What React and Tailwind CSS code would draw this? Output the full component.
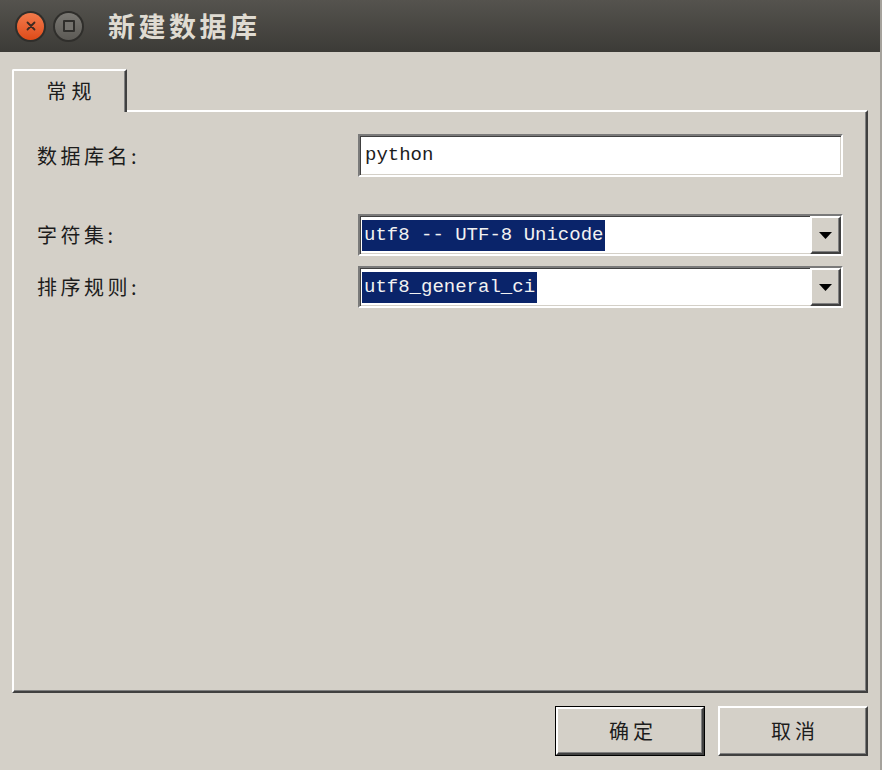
import React from 'react';

// Classic bevel styles (Win-style controls on Ubuntu window)
const sunken =
  'border-2 border-t-[#7a7a7a] border-l-[#7a7a7a] border-b-white border-r-white shadow-[inset_1px_1px_0_#404040,inset_-1px_-1px_0_#d4d0c8]';
const raised =
  'border-2 border-t-white border-l-white border-r-[#404040] border-b-[#404040] shadow-[inset_-1px_-1px_0_#808080]';

const cjk = "font-['Noto_Sans_CJK_SC','Noto_Sans',sans-serif]";
const mono = "font-['Liberation_Mono','Noto_Sans_CJK_SC',monospace]";

const Arrow = () => (
  <svg width="13" height="7" viewBox="0 0 13 7">
    <path d="M0 0h13L6.5 7z" fill="#000" />
  </svg>
);

const Combo = ({ value }) => (
  <div className={`w-[485px] h-[42px] bg-white flex items-stretch ${sunken}`}>
    <div className="flex-1 flex items-center pl-[2px]">
      <span className={`bg-[#0a246a] text-[#f2f2f2] text-[19px] leading-[31px] h-[31px] pl-[2px] pr-[2px] ${mono}`}>
        {value}
      </span>
    </div>
    <div className={`w-[31px] bg-[#d4d0c8] flex items-center justify-center ${raised}`}>
      <Arrow />
    </div>
  </div>
);

const Label = ({ children }) => (
  <div className={`w-[321px] text-[20px] tracking-[3.5px] text-[#1c1c1c] ${cjk}`}>{children}</div>
);

export default function App() {
  return (
    <div className={`w-[882px] h-[770px] bg-[#d4d0c8] flex flex-col border-r-2 border-[#a5a29c] ${cjk}`}>
      {/* title bar */}
      <div className="h-[52px] shrink-0 bg-gradient-to-b from-[#55534e] to-[#3c3b37] flex items-center pl-[15px]">
        <div className="w-[31px] h-[31px] rounded-full bg-[#2f2e2b] flex items-center justify-center">
          <div className="w-[27px] h-[27px] rounded-full bg-gradient-to-b from-[#f27a4a] to-[#df4a16] flex items-center justify-center">
            <svg width="10" height="10" viewBox="0 0 10 10">
              <path d="M1.5 1.5l7 7M8.5 1.5l-7 7" stroke="#3b2a22" strokeWidth="1.8" strokeLinecap="round" />
            </svg>
          </div>
        </div>
        <div className="ml-[7px] w-[31px] h-[31px] rounded-full bg-[#2f2e2b] flex items-center justify-center">
          <div className="w-[27px] h-[27px] rounded-full bg-gradient-to-b from-[#7a7873] to-[#5c5a55] flex items-center justify-center">
            <div className="w-[12px] h-[12px] border-2 border-[#2f2e2b] rounded-[1px] bg-[#74726d]" />
          </div>
        </div>
        <div className="ml-[24px] text-[27px] font-bold tracking-[3.5px] text-[#dfdbd2]">新建数据库</div>
      </div>

      {/* body */}
      <div className="flex-1 flex flex-col pt-[17px] px-[12px]">
        <div className="flex">
          <div className="relative z-10 -mb-[2px] w-[115px] h-[43px] bg-[#d4d0c8] border-t-2 border-l-2 border-r-2 border-t-white border-l-white border-r-[#404040] shadow-[inset_-1px_0_0_#808080] rounded-tl-[2px] flex items-center justify-center">
            <span className="text-[20px] tracking-[5px] text-[#1c1c1c] pb-[2px] pl-[4px]">常规</span>
          </div>
        </div>

        <div className="h-[583px] border-2 border-t-white border-l-white border-r-[#404040] border-b-[#404040] shadow-[inset_-1px_-1px_0_#808080] pl-[23px] pt-[22px]">
          <div className="flex items-center h-[43px]">
            <Label>数据库名:</Label>
            <div className={`w-[485px] h-[43px] bg-white flex items-center pl-[5px] ${sunken}`}>
              <span className={`text-[19px] text-[#1c1c1c] ${mono}`}>python</span>
            </div>
          </div>
          <div className="flex items-center mt-[37px]">
            <Label>字符集:</Label>
            <Combo value="utf8 -- UTF-8 Unicode" />
          </div>
          <div className="flex items-center mt-[10px]">
            <Label>排序规则:</Label>
            <Combo value="utf8_general_ci" />
          </div>
        </div>

        <div className="flex justify-end gap-[13px] mt-[13px]">
          <div className="border border-black">
            <button className={`w-[148px] h-[48px] bg-[#d4d0c8] text-[20px] tracking-[4px] pl-[6px] text-[#1c1c1c] ${raised}`}>
              确定
            </button>
          </div>
          <button className={`w-[150px] h-[50px] bg-[#d4d0c8] text-[20px] tracking-[4px] pl-[4px] text-[#1c1c1c] ${raised}`}>
            取消
          </button>
        </div>
      </div>
    </div>
  );
}
